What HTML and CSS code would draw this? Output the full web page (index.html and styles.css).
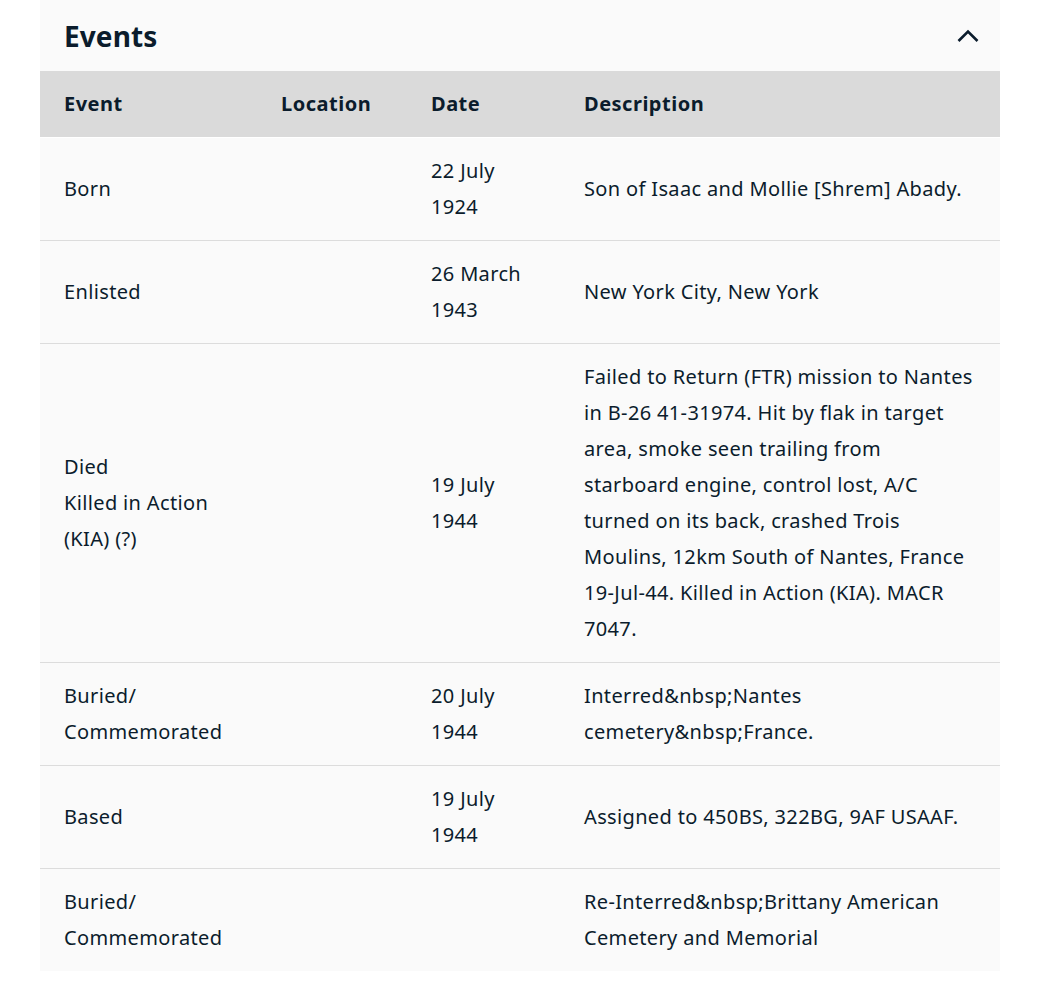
FILE: index.html
```html
<!DOCTYPE html>
<html>
<head>
<meta charset="utf-8">
<link rel="stylesheet" href="styles.css">
</head>
<body>
<section class="panel">
  <div class="panel-head">
    <h2 class="panel-title">Events</h2>
    <svg class="chevron" width="22" height="14" viewBox="0 0 22 14"><path d="M1.5 12 L11 2.5 L20.5 12" fill="none" stroke="#0b1c2c" stroke-width="2.6"/></svg>
  </div>
  <table class="events">
    <colgroup>
      <col class="c-event"><col class="c-loc"><col class="c-date"><col class="c-desc">
    </colgroup>
    <thead>
      <tr><th>Event</th><th>Location</th><th>Date</th><th>Description</th></tr>
    </thead>
    <tbody>
      <tr><td>Born</td><td></td><td>22 July 1924</td><td>Son of Isaac and Mollie [Shrem] Abady.</td></tr>
      <tr><td>Enlisted</td><td></td><td>26 March 1943</td><td>New York City, New York</td></tr>
      <tr><td>Died<br>Killed in Action (KIA) (?)</td><td></td><td>19 July 1944</td><td>Failed to Return (FTR) mission to Nantes in B-26 41-31974. Hit by flak in target area, smoke seen trailing from starboard engine, control lost, A/C turned on its back, crashed Trois Moulins, 12km South of Nantes, France 19-Jul-44. Killed in Action (KIA). MACR 7047.</td></tr>
      <tr><td>Buried/<wbr>Commemorated</td><td></td><td>20 July 1944</td><td>Interred&amp;nbsp;Nantes cemetery&amp;nbsp;France.</td></tr>
      <tr><td>Based</td><td></td><td>19 July 1944</td><td>Assigned to 450BS, 322BG, 9AF USAAF.</td></tr>
      <tr class="last"><td>Buried/<wbr>Commemorated</td><td></td><td></td><td>Re-Interred&amp;nbsp;Brittany American Cemetery and Memorial</td></tr>
    </tbody>
  </table>
</section>
</body>
</html>
```
FILE: styles.css
```css
html, body {
  margin: 0;
  padding: 0;
  background: #ffffff;
}
body {
  font-family: "Noto Sans", "Open Sans", sans-serif;
  color: #0b1c2c;
}
.panel {
  width: 960px;
  margin-left: 40px;
  background: #fafafa;
}
.panel-head {
  height: 71px;
  display: flex;
  align-items: center;
  justify-content: space-between;
  padding: 0 21px 0 24px;
}
.panel-title {
  margin: 0;
  font-size: 28px;
  font-weight: 700;
  line-height: 1;
  letter-spacing: 0.1px;
}
.chevron {
  display: block;
}
.events {
  width: 100%;
  border-collapse: collapse;
  table-layout: fixed;
  font-size: 20px;
  line-height: 36px;
  letter-spacing: 0.35px;
}
.c-event { width: 217px; }
.c-loc { width: 150px; }
.c-date { width: 153px; }
.c-desc { width: 440px; }
.events th {
  background: #dadada;
  text-align: left;
  font-weight: 700;
  height: 66px;
  padding: 0 24px;
  vertical-align: middle;
  letter-spacing: 0.5px;
  border-bottom: 1px solid #ffffff;
}
.events td {
  padding: 15px 24px;
  vertical-align: middle;
  border-bottom: 1px solid #dcdcdc;
}
.events tr.last td {
  border-bottom: none;
}
```
